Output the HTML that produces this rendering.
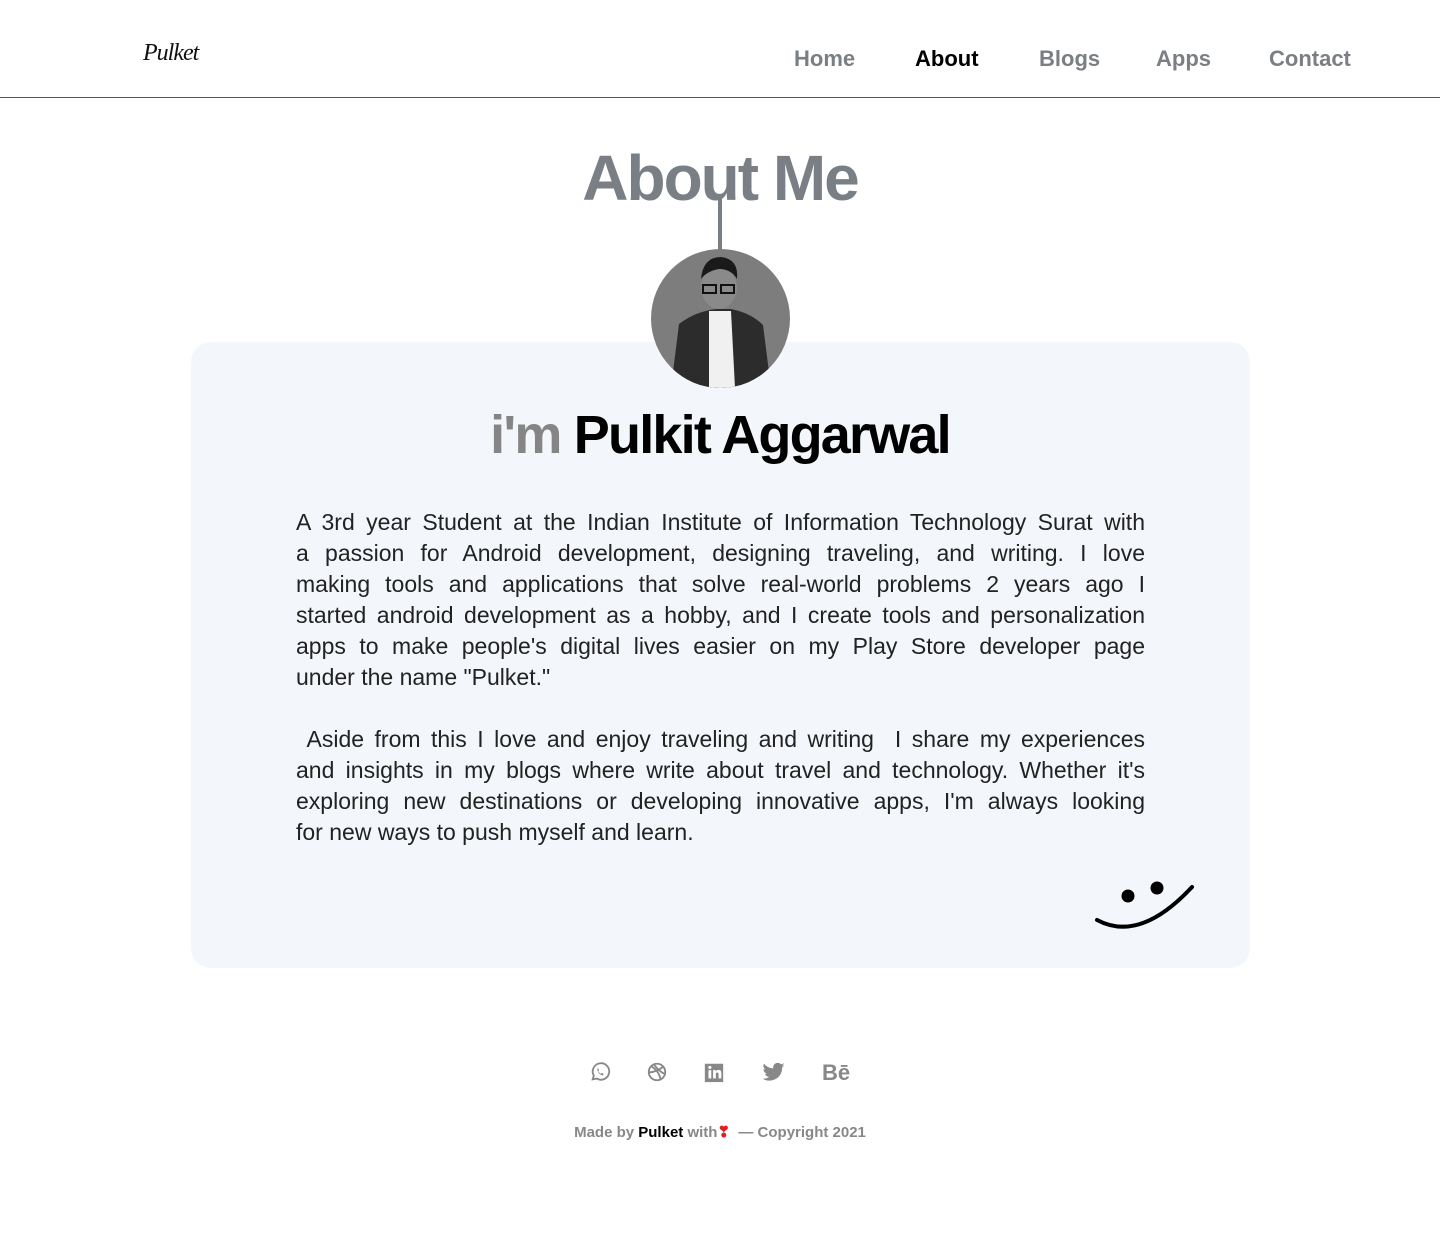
<!DOCTYPE html>
<html><head><meta charset="utf-8"><style>
*{margin:0;padding:0;box-sizing:border-box}
body{width:1440px;height:1251px;background:#fff;font-family:"Liberation Sans",sans-serif;position:relative;overflow:hidden}
.hdr{position:absolute;left:0;top:0;width:1440px;height:98px;border-bottom:1px solid #555}
.logo{position:absolute;left:143px;top:40px;font-family:"URW Chancery L","Z003",cursive;font-style:italic;font-size:24px;color:#111;letter-spacing:-1px}
.nav a{position:absolute;top:46px;font-size:22px;font-weight:bold;color:#7b7f84;text-decoration:none}
.title{position:absolute;left:0;width:1440px;top:141px;text-align:center;font-size:64px;font-weight:bold;color:#7a7f85;letter-spacing:-2px}
.line{position:absolute;left:718px;top:198px;width:4px;height:54px;background:#7a7f85}
.card{position:absolute;left:191px;top:342px;width:1059px;height:626px;background:#f3f6fa;border-radius:20px}
.av{position:absolute;left:651px;top:249px;width:139px;height:139px;border-radius:50%;background:#7d7d7d;overflow:hidden}
.name{position:absolute;left:0;width:1440px;top:404px;text-align:center;font-size:54px;font-weight:bold;color:#000;letter-spacing:-1.8px}
.name span{color:#858585}
.txt{position:absolute;left:296px;width:849px;top:507px;font-size:23px;line-height:31px;color:#222}
.txt div{text-align:justify;text-align-last:justify;white-space:nowrap}
.txt div.l{text-align-last:left}
.icons{position:absolute;top:1060px;left:0;width:1440px}
.icons svg{position:absolute}
.foot{position:absolute;top:1123px;left:0;width:1440px;text-align:center;font-size:15px;color:#888;font-weight:bold}
.foot b{color:#000}
</style></head><body>
<div class="hdr">
<div class="logo">Pulket</div>
<div class="nav">
<a style="left:794px">Home</a>
<a style="left:915px;color:#000">About</a>
<a style="left:1039px">Blogs</a>
<a style="left:1156px">Apps</a>
<a style="left:1269px">Contact</a>
</div></div>
<div class="title">About Me</div>
<div class="line"></div>
<div class="card"></div>
<div class="av"><svg width="139" height="139" viewBox="0 0 139 139">
<path d="M20 139 L28 75 Q45 62 66 60 L80 60 Q100 64 112 76 L120 139Z" fill="#2c2c2c"/>
<path d="M58 62 L80 62 L84 139 L58 139Z" fill="#f0f0f0"/>
<ellipse cx="68" cy="38" rx="18" ry="22" fill="#8a8a8a"/>
<path d="M50 30 Q52 8 70 8 Q88 10 86 30 Q80 20 68 20 Q56 22 50 30Z" fill="#1a1a1a"/>
<rect x="52" y="36" width="13" height="8" fill="none" stroke="#111" stroke-width="2"/>
<rect x="70" y="36" width="13" height="8" fill="none" stroke="#111" stroke-width="2"/>
</svg></div>
<div class="name"><span>i'm</span> Pulkit Aggarwal</div>
<div class="txt">
<div>A 3rd year Student at the Indian Institute of Information Technology Surat with</div>
<div>a passion for Android development, designing traveling, and writing. I love</div>
<div>making tools and applications that solve real-world problems 2 years ago I</div>
<div>started android development as a hobby, and I create tools and personalization</div>
<div>apps to make people's digital lives easier on my Play Store developer page</div>
<div class="l">under the name "Pulket."</div>
<div class="l">&nbsp;</div>
<div>&nbsp;Aside from this I love and enjoy traveling and writing &nbsp;I share my experiences</div>
<div>and insights in my blogs where write about travel and technology. Whether it's</div>
<div>exploring new destinations or developing innovative apps, I'm always looking</div>
<div class="l">for new ways to push myself and learn.</div>
</div>
<svg style="position:absolute;left:1090px;top:875px" width="110" height="62" viewBox="0 0 110 62">
<circle cx="38" cy="21" r="6.5" fill="#000"/><circle cx="67" cy="13" r="6.5" fill="#000"/>
<path d="M7 45 Q50 68 102 12" fill="none" stroke="#000" stroke-width="4" stroke-linecap="round"/>
</svg>
<div class="icons">
<svg style="left:589px" width="22" height="24" viewBox="0 0 24 24"><path d="M4 20 L5.3 16 A9 9 0 1 1 8.5 19.2Z" fill="none" stroke="#888" stroke-width="2"/><path d="M9 8 Q9 14 15 16 L16 14 L14 13 L13 14 Q11 13 10 11 L11 10 L10 8Z" fill="#888"/></svg>
<svg style="left:646px" width="22" height="24" viewBox="0 0 24 24" fill="none" stroke="#888" stroke-width="2"><circle cx="12" cy="12" r="9"/><path d="M5 5.5 Q14 10 16 20.5 M3 12.5 Q12 12 19 6 M8.5 3.7 Q15 12 20.5 14"/></svg>
<svg style="left:703px" width="22" height="24" viewBox="0 0 24 24"><rect x="2" y="3" width="20" height="20" fill="#888"/><rect x="6" y="10" width="3" height="9" fill="#fff"/><circle cx="7.5" cy="7" r="1.7" fill="#fff"/><path d="M11 10h3v1.5q1-1.8 3-1.8q3 0 3 3.5V19h-3v-5q0-1.5-1.4-1.5T14 14v5h-3Z" fill="#fff"/></svg>
<svg style="left:761px" width="25" height="24" viewBox="0 0 24 24"><path d="M23 5a9 9 0 0 1-2.6.7 4.5 4.5 0 0 0 2-2.5 9 9 0 0 1-2.9 1.1A4.5 4.5 0 0 0 11.8 8.4 12.8 12.8 0 0 1 2.5 3.7a4.5 4.5 0 0 0 1.4 6 4.5 4.5 0 0 1-2-.6 4.5 4.5 0 0 0 3.6 4.5 4.5 4.5 0 0 1-2 .1 4.5 4.5 0 0 0 4.2 3.1A9 9 0 0 1 1 18.6 12.8 12.8 0 0 0 20.7 7.2 9 9 0 0 0 23 5Z" fill="#888"/></svg>
<div style="position:absolute;left:822px;top:0;font-size:22px;font-weight:bold;color:#888">Bē</div>
</div>
<div class="foot">Made by <b>Pulket</b> with<span style="color:#e02020">❣</span> &nbsp;— Copyright 2021</div>
</body></html>
